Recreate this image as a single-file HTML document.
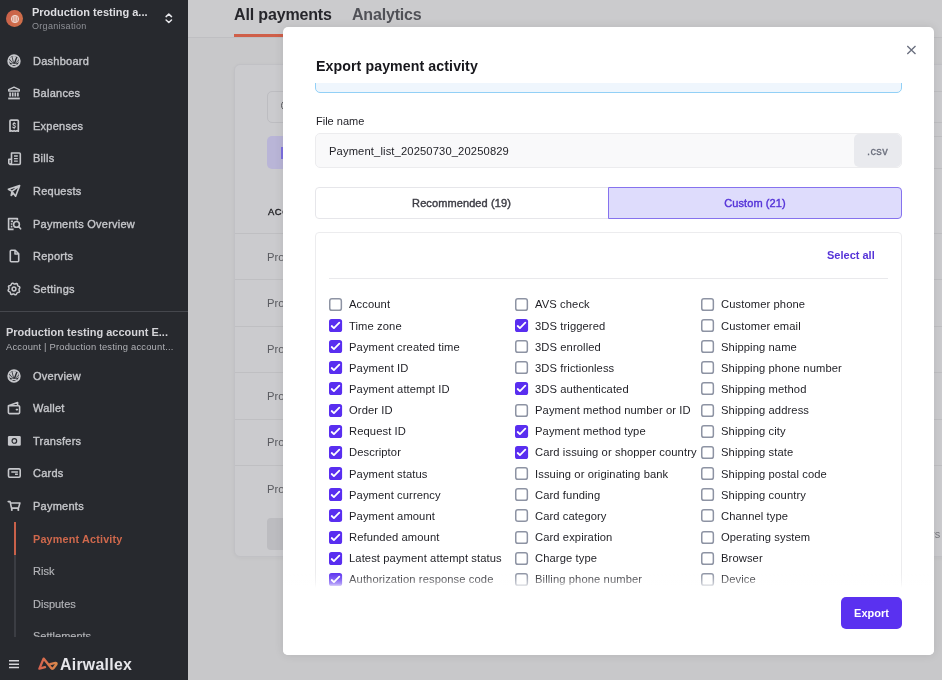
<!DOCTYPE html>
<html lang="en">
<head>
<meta charset="utf-8">
<title>Export payment activity</title>
<style>
*{box-sizing:border-box;margin:0;padding:0}
html,body{width:942px;height:680px;overflow:hidden}
body{font-family:"Liberation Sans",sans-serif;background:#c8c8ca;position:relative;color:#1c1c20}
.abs{position:absolute}
.t{position:absolute;white-space:nowrap;line-height:1;will-change:transform}
#side{position:absolute;left:0;top:0;width:188px;height:680px;background:#27292e;overflow:hidden}
#side .it{font-size:11px;color:#c6c7cb;letter-spacing:.25px;-webkit-text-stroke:.35px #c6c7cb}
#side .sub{color:#b4b5b9;letter-spacing:0;-webkit-text-stroke:.15px #b4b5b9}
#side svg.ic{position:absolute;overflow:visible;left:7px;width:14px;height:14px;fill:none;stroke:#c6c7cb;stroke-width:1.6;stroke-linejoin:round;stroke-linecap:round}
#hdr{position:absolute;left:188px;top:0;width:754px;height:38px;background:#cbcbcd;border-bottom:1px solid #bfbfc2}
#card{position:absolute;left:234px;top:64px;width:720px;height:493px;background:#cbcbce;border:1px solid #c1c1c5;border-radius:6px;box-shadow:0 1px 4px rgba(0,0,0,.04)}
.row{position:absolute;left:235px;width:720px;height:1px;background:#bfbfc2}
#modal{position:absolute;left:283px;top:27px;width:651px;height:628px;background:#fff;border-radius:5px;box-shadow:0 0 10px rgba(0,0,0,.1);overflow:hidden}
.cb{position:absolute;width:13px;height:13px;border:1.5px solid #8c91a1;border-radius:3px;background:#fff}
.cb.on{border:none;background:#592ef0}
.cb.on svg{position:absolute;left:0;top:0;width:13px;height:13px}
.lb{font-size:11.2px;color:#1e1e24;letter-spacing:.1px}
</style>
</head>
<body>
<div id="hdr"></div><div class="t" style="left:234.0px;top:7.1px;font-size:16px;font-weight:bold;color:#26262b;letter-spacing:-.15px">All payments</div><div class="t" style="left:352.4px;top:7.1px;font-size:16px;font-weight:bold;color:#505157;letter-spacing:-.18px">Analytics</div><div class="abs" style="left:234px;top:34px;width:98px;height:3px;background:#cf5f49"></div><div id="card"></div><div class="abs" style="left:267px;top:91px;width:300px;height:32px;border:1px solid #bdbdc1;border-radius:5px;background:#cbcbce"></div><div class="abs" style="left:281px;top:100px;width:11px;height:11px;border:1.6px solid #5a5b60;border-radius:50%"></div><div class="abs" style="left:267px;top:136px;width:60px;height:33px;border-radius:5px;background:#b9b5d7"></div><div class="t" style="left:267.6px;top:206.7px;font-size:9.4px;color:#222226;letter-spacing:.6px;-webkit-text-stroke:.35px #222226">ACCOUNT</div><div class="abs" style="left:281px;top:147px;width:3px;height:12px;background:#7d6fe0"></div><div class="abs" style="left:279px;top:529px;width:2px;height:10px;background:#85868c"></div><div class="row" style="top:233px"></div><div class="row" style="top:279px"></div><div class="row" style="top:326px"></div><div class="row" style="top:372px"></div><div class="row" style="top:419px"></div><div class="row" style="top:465px"></div><div class="t" style="left:267.4px;top:252.1px;font-size:11.2px;color:#5a5b60">Production</div><div class="t" style="left:267.4px;top:298.1px;font-size:11.2px;color:#5a5b60">Production</div><div class="t" style="left:267.4px;top:344.1px;font-size:11.2px;color:#5a5b60">Production</div><div class="t" style="left:267.4px;top:391.1px;font-size:11.2px;color:#5a5b60">Production</div><div class="t" style="left:267.4px;top:437.1px;font-size:11.2px;color:#5a5b60">Production</div><div class="t" style="left:267.4px;top:484.1px;font-size:11.2px;color:#5a5b60">Production</div><div class="abs" style="left:267px;top:518px;width:60px;height:32px;border-radius:4px;background:#bcbcc0"></div><div class="abs" style="left:934px;top:91px;width:8px;height:1px;background:#bfbfc2"></div><div class="abs" style="left:934px;top:122px;width:8px;height:1px;background:#bfbfc2"></div><div class="abs" style="left:934px;top:136px;width:8px;height:1px;background:#bfbfc2"></div><div class="abs" style="left:934px;top:168px;width:8px;height:1px;background:#bfbfc2"></div><div class="t" style="right:1.5px;top:529px;font-size:11px;color:#77787d">filters</div>
<div id="side"><div class="abs" style="left:6px;top:10px;width:17px;height:17px;border-radius:50%;background:linear-gradient(120deg,#c95e4a,#d0724a)"></div><svg class="abs" style="left:9.5px;top:13.5px;width:10px;height:10px" viewBox="0 0 10 10" fill="none" stroke="#f0d8d0" stroke-width="1"><circle cx="5" cy="5" r="3.7"/><path d="M1.3 5 H8.7 M5 1.3 V8.7 M2.1 3 H7.9 M2.1 7 H7.9 M3.4 1.8 V8.2 M6.6 1.8 V8.2" stroke-width=".8"/></svg><div class="t" style="left:32.4px;top:6.8px;font-size:11px;font-weight:bold;color:#dedee2">Production testing a...</div><div class="t" style="left:32.4px;top:21.6px;font-size:9px;color:#8f9197;letter-spacing:.3px">Organisation</div><svg class="abs" style="left:164px;top:12px;width:10px;height:13px" viewBox="0 0 10 13" fill="none" stroke="#e8e8ec" stroke-width="1.5" stroke-linecap="round" stroke-linejoin="round"><path d="M2.1 4.6 L4.8 2.1 L7.5 4.6 M2.1 8 L4.8 10.5 L7.5 8"/></svg><svg class="ic" style="top:53.8px" viewBox="0 0 14 14"><circle cx="7" cy="7" r="5.8" stroke-width="1.8"/><path d="M7 10.6 L2.3 8.3 A4.9 4.9 0 1 1 11.7 8.3 Z" fill="#c6c7cb" stroke="none"/><path d="M7 10.6 L2.6 5.4 M7 10.6 L5 2.6 M7 10.6 L11.6 6.2" stroke="#27292e" stroke-width=".8"/><path d="M7.2 10 L9.7 3.6" stroke="#27292e" stroke-width="1.4"/><path d="M4.2 11.3 Q7 9.6 9.8 11.3" stroke-width="1.3"/></svg><div class="t it" style="left:32.9px;top:55.7px;font-size:11px;">Dashboard</div><svg class="ic" style="top:86.4px" viewBox="0 0 14 14"><path d="M1.7 5 V3.6 L7 1.2 L12.3 3.6 V5 Z" stroke-width="1.4"/><path d="M3.1 6.6 V10.4 M5.7 6.6 V10.4 M8.3 6.6 V10.4 M10.9 6.6 V10.4" stroke-linecap="butt" stroke-width="1.7"/><path d="M1.2 12.5 H12.8" stroke-width="1.8" stroke-linecap="butt"/></svg><div class="t it" style="left:32.9px;top:88.3px;font-size:11px;">Balances</div><svg class="ic" style="top:118.9px" viewBox="0 0 14 14"><path d="M3 2.1 a1 1 0 0 1 1 -1 H10.3 a1 1 0 0 1 1 1 V12.2 L9.9 11.7 L8.5 12.2 L7.15 11.7 L5.8 12.2 L4.4 11.7 L3 12.2 Z" stroke-width="1.7"/><path d="M8.4 4.9 C7.8 4 5.9 4.2 6 5.4 C6.1 6.6 8.4 6.2 8.4 7.6 C8.4 8.8 6.4 8.9 5.8 8.1 M7.15 3.3 V4.2 M7.15 8.7 V9.6" stroke-width="1.1"/></svg><div class="t it" style="left:32.9px;top:120.8px;font-size:11px;">Expenses</div><svg class="ic" style="top:151.5px" viewBox="0 0 14 14"><path d="M4.5 1 H12.3 a1 1 0 0 1 1 1 V11.3 a1.2 1.2 0 0 1 -1.2 1.2 H3 M4.5 1 V11 a1.4 1.4 0 0 1 -2.7 0.2 V7.3 H4.3" stroke-width="1.6"/><path d="M7 4 H10.8 M7 6.6 H10.8 M7 9.2 H10.8" stroke-width="1.3" stroke-linecap="butt"/></svg><div class="t it" style="left:32.9px;top:153.4px;font-size:11px;">Bills</div><svg class="ic" style="top:184.1px" viewBox="0 0 14 14"><path d="M12.6 1.6 L1.4 5.2 L5 7.4 L12.6 1.6 L8.6 12.2 L5 7.4 M5 7.4 L4.2 11.4 L6.6 9.4"/></svg><div class="t it" style="left:32.9px;top:186.0px;font-size:11px;">Requests</div><svg class="ic" style="top:216.6px" viewBox="0 0 14 14"><path d="M10.4 3.4 V1.6 H1.6 V12.4 H6.6 M3.8 4.4 H6 M3.8 7 H5.4 M3.8 9.6 H5.4" stroke-linecap="butt"/><circle cx="9.5" cy="7.4" r="2.9"/><path d="M11.6 9.6 L13.6 11.8"/></svg><div class="t it" style="left:32.9px;top:218.5px;font-size:11px;">Payments Overview</div><svg class="ic" style="top:249.2px" viewBox="0 0 14 14"><path d="M3.3 2.2 a1 1 0 0 1 1 -1 H8.2 L11.7 4.8 V11.8 a1 1 0 0 1 -1 1 H4.3 a1 1 0 0 1 -1 -1 Z M8 1.6 V5 H11.5"/></svg><div class="t it" style="left:32.9px;top:251.1px;font-size:11px;">Reports</div><svg class="ic" style="top:281.8px" viewBox="0 0 14 14"><path d="M12.54 9.30 L11.99 10.33 L10.61 10.61 L9.83 11.24 L9.30 12.54 L8.17 12.88 L7.00 12.10 L6.01 12.00 L4.70 12.54 L3.67 11.99 L3.39 10.61 L2.76 9.83 L1.46 9.30 L1.12 8.17 L1.90 7.00 L2.00 6.01 L1.46 4.70 L2.01 3.67 L3.39 3.39 L4.17 2.76 L4.70 1.46 L5.83 1.12 L7.00 1.90 L7.99 2.00 L9.30 1.46 L10.33 2.01 L10.61 3.39 L11.24 4.17 L12.54 4.70 L12.88 5.83 L12.10 7.00 L12.00 7.99 Z" stroke-width="1.5"/><circle cx="7" cy="7" r="1.9" stroke-width="1.5"/></svg><div class="t it" style="left:32.9px;top:283.7px;font-size:11px;">Settings</div><div class="abs" style="left:0;top:311px;width:188px;height:1px;background:#45474d"></div><div class="t" style="left:6.0px;top:326.9px;font-size:11px;font-weight:bold;color:#d4d4d8">Production testing account E...</div><div class="t" style="left:6.0px;top:341.8px;font-size:9.4px;color:#b0b1b6;letter-spacing:.2px">Account | Production testing account...</div><svg class="ic" style="top:368.6px" viewBox="0 0 14 14"><circle cx="7" cy="7" r="5.8" stroke-width="1.8"/><path d="M7 10.6 L2.3 8.3 A4.9 4.9 0 1 1 11.7 8.3 Z" fill="#c6c7cb" stroke="none"/><path d="M7 10.6 L2.6 5.4 M7 10.6 L5 2.6 M7 10.6 L11.6 6.2" stroke="#27292e" stroke-width=".8"/><path d="M7.2 10 L9.7 3.6" stroke="#27292e" stroke-width="1.4"/><path d="M4.2 11.3 Q7 9.6 9.8 11.3" stroke-width="1.3"/></svg><div class="t it" style="left:32.9px;top:370.5px;font-size:11px;">Overview</div><svg class="ic" style="top:401.2px" viewBox="0 0 14 14"><path d="M1.4 4.8 H11.6 a1 1 0 0 1 1 1 V11.6 a1 1 0 0 1 -1 1 H2.4 a1 1 0 0 1 -1 -1 Z M1.4 4.8 L10.6 1.6 V4.6 M9.4 8.6 H10.4"/></svg><div class="t it" style="left:32.9px;top:403.1px;font-size:11px;">Wallet</div><svg class="ic" style="top:433.7px" viewBox="0 0 14 14"><rect x="0.9" y="2.1" width="12.9" height="9.7" rx="1.3" fill="#c6c7cb" stroke="none"/><circle cx="7.35" cy="6.95" r="2.3" fill="none" stroke="#27292e" stroke-width="1.2"/></svg><div class="t it" style="left:32.9px;top:435.6px;font-size:11px;">Transfers</div><svg class="ic" style="top:466.3px" viewBox="0 0 14 14"><rect x="1.5" y="2.9" width="11.7" height="8.3" rx="1.2"/><path d="M4.3 6 H10.9 M8 8.3 H10.9" stroke-linecap="butt" stroke-width="1.4"/></svg><div class="t it" style="left:32.9px;top:468.2px;font-size:11px;">Cards</div><svg class="ic" style="top:498.9px" viewBox="0 0 14 14"><path d="M1.2 2.6 H3.1 L4.5 9.1 H11.5 L12.9 4 H3.5" stroke-width="1.6"/><path d="M4.9 9.1 L4.6 10.4 M11.2 9.1 L11.4 10.4" stroke-width="1.4"/><circle cx="4.8" cy="11.1" r="1" fill="#c6c7cb" stroke="none"/><circle cx="11.3" cy="11.1" r="1" fill="#c6c7cb" stroke="none"/></svg><div class="t it" style="left:32.9px;top:500.8px;font-size:11px;">Payments</div><div class="abs" style="left:14px;top:522px;width:2px;height:115px;background:#3b3d43"></div><div class="abs" style="left:14px;top:522px;width:2px;height:33px;background:#c9614a"></div><div class="t" style="left:32.9px;top:533.7px;font-size:10.8px;font-weight:bold;color:#cf684c;letter-spacing:.18px">Payment Activity</div><div class="t it sub" style="left:32.9px;top:566.0px;font-size:11px;">Risk</div><div class="t it sub" style="left:32.9px;top:598.5px;font-size:11px;">Disputes</div><div class="t it sub" style="left:32.9px;top:631.1px;font-size:11px;">Settlements</div><div class="abs" style="left:0;top:637px;width:188px;height:43px;background:#27292e"></div><svg class="abs" style="left:9px;top:659px;width:10px;height:10px" viewBox="0 0 10 10" stroke="#d6d6da" stroke-width="1.5"><path d="M0 1.8 H10 M0 5.2 H10 M0 8.6 H10"/></svg><svg class="abs" style="left:36px;top:655px;width:24px;height:18px" viewBox="36 655 24 18" fill="none" stroke="url(#lg)" stroke-width="2.35" stroke-linejoin="round" stroke-linecap="round"><defs><linearGradient id="lg" x1="38" y1="0" x2="58" y2="0" gradientUnits="userSpaceOnUse"><stop offset="0" stop-color="#d7604f"/><stop offset="1" stop-color="#da8b4b"/></linearGradient></defs><path d="M45 667.2 L39.4 668.6 L43.6 658.6 L51.4 668.2 Q52.6 669.4 53.8 667.8 L56.4 664.2 Q57 662.8 55.4 662.9 L50.2 664.2"/></svg><div class="t" style="left:60.4px;top:656.8px;font-size:15.8px;font-weight:bold;color:#e6e6ea;letter-spacing:.3px">Airwallex</div></div>
<div id="modal"><div class="t" style="left:33.3px;top:31.6px;font-size:14.2px;font-weight:bold;color:#17171c;letter-spacing:.08px">Export payment activity</div><svg class="abs" style="left:623px;top:17px;width:12px;height:12px" viewBox="0 0 12 12" stroke="#6a6f7f" stroke-width="1.35" fill="none"><path d="M1.3 1.9 L9.5 9.9 M9.5 1.9 L1.3 9.9"/></svg><div class="abs" style="left:32px;top:26px;width:587px;height:40px;border:1px solid #92d0f6;border-radius:5px;background:#eff6fd;clip-path:inset(30px 0 0 0)"></div><div class="t" style="left:32.8px;top:88.6px;font-size:11px;color:#1e1e24">File name</div><div class="abs" style="left:32px;top:106px;width:587px;height:35px;border:1px solid #ececee;border-radius:5px;background:#f9f9fa"></div><div class="abs" style="left:571px;top:107px;width:47px;height:33px;background:#e9eaee;border-radius:5px"></div><div class="t" style="left:46.4px;top:118.8px;font-size:11.2px;color:#1e1e24;letter-spacing:.13px">Payment_list_20250730_20250829</div><div class="t" style="left:584.2px;top:119.0px;font-size:11px;color:#6b6f7d;letter-spacing:.4px;-webkit-text-stroke:.3px #6b6f7d">.csv</div><div class="abs" style="left:32px;top:160px;width:294px;height:32px;border:1px solid #e6e6ea;border-radius:4px 0 0 4px;background:#fff"></div><div class="abs" style="left:325px;top:160px;width:294px;height:32px;border:1px solid #8672ee;border-radius:0 4px 4px 0;background:#dedcfc"></div><div class="t" style="left:32px;top:170.5px;width:293px;text-align:center;font-size:11px;letter-spacing:.1px;color:#3c3c44;-webkit-text-stroke:.4px #3c3c44">Recommended (19)</div><div class="t" style="left:325px;top:170.5px;width:294px;text-align:center;font-size:11px;letter-spacing:.08px;color:#5533d8;-webkit-text-stroke:.4px #5533d8">Custom (21)</div><div class="abs" style="left:32px;top:205px;width:587px;height:380px;border:1px solid #ececee;border-radius:4px;background:#fff"></div><div class="t" style="left:544.3px;top:223.1px;font-size:11px;font-weight:bold;color:#5533d8">Select all</div><div class="abs" style="left:46px;top:251px;width:559px;height:1px;background:#e9e9ec"></div><svg class="abs" style="left:46.2px;top:270.8px;width:14px;height:14px" viewBox="0 0 14 14"><rect x="0.75" y="0.75" width="11.6" height="11.6" rx="2.2" fill="#fff" stroke="#8d93a3" stroke-width="1.5"/></svg><div class="t lb" style="left:65.8px;top:272.3px;font-size:11.2px;">Account</div><svg class="abs" style="left:46.2px;top:292.0px;width:14px;height:14px" viewBox="0 0 14 14"><rect x="0" y="0" width="13.1" height="13.1" rx="2.6" fill="#592ef0"/><path d="M2.7 7 L4.9 9.1 L10.3 3.6" fill="none" stroke="#fff" stroke-width="1.8" stroke-linecap="round" stroke-linejoin="round"/></svg><div class="t lb" style="left:65.8px;top:293.5px;font-size:11.2px;">Time zone</div><svg class="abs" style="left:46.2px;top:313.1px;width:14px;height:14px" viewBox="0 0 14 14"><rect x="0" y="0" width="13.1" height="13.1" rx="2.6" fill="#592ef0"/><path d="M2.7 7 L4.9 9.1 L10.3 3.6" fill="none" stroke="#fff" stroke-width="1.8" stroke-linecap="round" stroke-linejoin="round"/></svg><div class="t lb" style="left:65.8px;top:314.6px;font-size:11.2px;">Payment created time</div><svg class="abs" style="left:46.2px;top:334.3px;width:14px;height:14px" viewBox="0 0 14 14"><rect x="0" y="0" width="13.1" height="13.1" rx="2.6" fill="#592ef0"/><path d="M2.7 7 L4.9 9.1 L10.3 3.6" fill="none" stroke="#fff" stroke-width="1.8" stroke-linecap="round" stroke-linejoin="round"/></svg><div class="t lb" style="left:65.8px;top:335.8px;font-size:11.2px;">Payment ID</div><svg class="abs" style="left:46.2px;top:355.4px;width:14px;height:14px" viewBox="0 0 14 14"><rect x="0" y="0" width="13.1" height="13.1" rx="2.6" fill="#592ef0"/><path d="M2.7 7 L4.9 9.1 L10.3 3.6" fill="none" stroke="#fff" stroke-width="1.8" stroke-linecap="round" stroke-linejoin="round"/></svg><div class="t lb" style="left:65.8px;top:356.9px;font-size:11.2px;">Payment attempt ID</div><svg class="abs" style="left:46.2px;top:376.6px;width:14px;height:14px" viewBox="0 0 14 14"><rect x="0" y="0" width="13.1" height="13.1" rx="2.6" fill="#592ef0"/><path d="M2.7 7 L4.9 9.1 L10.3 3.6" fill="none" stroke="#fff" stroke-width="1.8" stroke-linecap="round" stroke-linejoin="round"/></svg><div class="t lb" style="left:65.8px;top:378.1px;font-size:11.2px;">Order ID</div><svg class="abs" style="left:46.2px;top:397.7px;width:14px;height:14px" viewBox="0 0 14 14"><rect x="0" y="0" width="13.1" height="13.1" rx="2.6" fill="#592ef0"/><path d="M2.7 7 L4.9 9.1 L10.3 3.6" fill="none" stroke="#fff" stroke-width="1.8" stroke-linecap="round" stroke-linejoin="round"/></svg><div class="t lb" style="left:65.8px;top:399.2px;font-size:11.2px;">Request ID</div><svg class="abs" style="left:46.2px;top:418.9px;width:14px;height:14px" viewBox="0 0 14 14"><rect x="0" y="0" width="13.1" height="13.1" rx="2.6" fill="#592ef0"/><path d="M2.7 7 L4.9 9.1 L10.3 3.6" fill="none" stroke="#fff" stroke-width="1.8" stroke-linecap="round" stroke-linejoin="round"/></svg><div class="t lb" style="left:65.8px;top:420.4px;font-size:11.2px;">Descriptor</div><svg class="abs" style="left:46.2px;top:440.0px;width:14px;height:14px" viewBox="0 0 14 14"><rect x="0" y="0" width="13.1" height="13.1" rx="2.6" fill="#592ef0"/><path d="M2.7 7 L4.9 9.1 L10.3 3.6" fill="none" stroke="#fff" stroke-width="1.8" stroke-linecap="round" stroke-linejoin="round"/></svg><div class="t lb" style="left:65.8px;top:441.5px;font-size:11.2px;">Payment status</div><svg class="abs" style="left:46.2px;top:461.2px;width:14px;height:14px" viewBox="0 0 14 14"><rect x="0" y="0" width="13.1" height="13.1" rx="2.6" fill="#592ef0"/><path d="M2.7 7 L4.9 9.1 L10.3 3.6" fill="none" stroke="#fff" stroke-width="1.8" stroke-linecap="round" stroke-linejoin="round"/></svg><div class="t lb" style="left:65.8px;top:462.7px;font-size:11.2px;">Payment currency</div><svg class="abs" style="left:46.2px;top:482.3px;width:14px;height:14px" viewBox="0 0 14 14"><rect x="0" y="0" width="13.1" height="13.1" rx="2.6" fill="#592ef0"/><path d="M2.7 7 L4.9 9.1 L10.3 3.6" fill="none" stroke="#fff" stroke-width="1.8" stroke-linecap="round" stroke-linejoin="round"/></svg><div class="t lb" style="left:65.8px;top:483.8px;font-size:11.2px;">Payment amount</div><svg class="abs" style="left:46.2px;top:503.5px;width:14px;height:14px" viewBox="0 0 14 14"><rect x="0" y="0" width="13.1" height="13.1" rx="2.6" fill="#592ef0"/><path d="M2.7 7 L4.9 9.1 L10.3 3.6" fill="none" stroke="#fff" stroke-width="1.8" stroke-linecap="round" stroke-linejoin="round"/></svg><div class="t lb" style="left:65.8px;top:505.0px;font-size:11.2px;">Refunded amount</div><svg class="abs" style="left:46.2px;top:524.6px;width:14px;height:14px" viewBox="0 0 14 14"><rect x="0" y="0" width="13.1" height="13.1" rx="2.6" fill="#592ef0"/><path d="M2.7 7 L4.9 9.1 L10.3 3.6" fill="none" stroke="#fff" stroke-width="1.8" stroke-linecap="round" stroke-linejoin="round"/></svg><div class="t lb" style="left:65.8px;top:526.1px;font-size:11.2px;">Latest payment attempt status</div><svg class="abs" style="left:46.2px;top:545.8px;width:14px;height:14px" viewBox="0 0 14 14"><rect x="0" y="0" width="13.1" height="13.1" rx="2.6" fill="#592ef0"/><path d="M2.7 7 L4.9 9.1 L10.3 3.6" fill="none" stroke="#fff" stroke-width="1.8" stroke-linecap="round" stroke-linejoin="round"/></svg><div class="t lb" style="left:65.8px;top:547.3px;font-size:11.2px;">Authorization response code</div><svg class="abs" style="left:232.2px;top:270.8px;width:14px;height:14px" viewBox="0 0 14 14"><rect x="0.75" y="0.75" width="11.6" height="11.6" rx="2.2" fill="#fff" stroke="#8d93a3" stroke-width="1.5"/></svg><div class="t lb" style="left:251.8px;top:272.3px;font-size:11.2px;">AVS check</div><svg class="abs" style="left:232.2px;top:292.0px;width:14px;height:14px" viewBox="0 0 14 14"><rect x="0" y="0" width="13.1" height="13.1" rx="2.6" fill="#592ef0"/><path d="M2.7 7 L4.9 9.1 L10.3 3.6" fill="none" stroke="#fff" stroke-width="1.8" stroke-linecap="round" stroke-linejoin="round"/></svg><div class="t lb" style="left:251.8px;top:293.5px;font-size:11.2px;">3DS triggered</div><svg class="abs" style="left:232.2px;top:313.1px;width:14px;height:14px" viewBox="0 0 14 14"><rect x="0.75" y="0.75" width="11.6" height="11.6" rx="2.2" fill="#fff" stroke="#8d93a3" stroke-width="1.5"/></svg><div class="t lb" style="left:251.8px;top:314.6px;font-size:11.2px;">3DS enrolled</div><svg class="abs" style="left:232.2px;top:334.3px;width:14px;height:14px" viewBox="0 0 14 14"><rect x="0.75" y="0.75" width="11.6" height="11.6" rx="2.2" fill="#fff" stroke="#8d93a3" stroke-width="1.5"/></svg><div class="t lb" style="left:251.8px;top:335.8px;font-size:11.2px;">3DS frictionless</div><svg class="abs" style="left:232.2px;top:355.4px;width:14px;height:14px" viewBox="0 0 14 14"><rect x="0" y="0" width="13.1" height="13.1" rx="2.6" fill="#592ef0"/><path d="M2.7 7 L4.9 9.1 L10.3 3.6" fill="none" stroke="#fff" stroke-width="1.8" stroke-linecap="round" stroke-linejoin="round"/></svg><div class="t lb" style="left:251.8px;top:356.9px;font-size:11.2px;">3DS authenticated</div><svg class="abs" style="left:232.2px;top:376.6px;width:14px;height:14px" viewBox="0 0 14 14"><rect x="0.75" y="0.75" width="11.6" height="11.6" rx="2.2" fill="#fff" stroke="#8d93a3" stroke-width="1.5"/></svg><div class="t lb" style="left:251.8px;top:378.1px;font-size:11.2px;">Payment method number or ID</div><svg class="abs" style="left:232.2px;top:397.7px;width:14px;height:14px" viewBox="0 0 14 14"><rect x="0" y="0" width="13.1" height="13.1" rx="2.6" fill="#592ef0"/><path d="M2.7 7 L4.9 9.1 L10.3 3.6" fill="none" stroke="#fff" stroke-width="1.8" stroke-linecap="round" stroke-linejoin="round"/></svg><div class="t lb" style="left:251.8px;top:399.2px;font-size:11.2px;">Payment method type</div><svg class="abs" style="left:232.2px;top:418.9px;width:14px;height:14px" viewBox="0 0 14 14"><rect x="0" y="0" width="13.1" height="13.1" rx="2.6" fill="#592ef0"/><path d="M2.7 7 L4.9 9.1 L10.3 3.6" fill="none" stroke="#fff" stroke-width="1.8" stroke-linecap="round" stroke-linejoin="round"/></svg><div class="t lb" style="left:251.8px;top:420.4px;font-size:11.2px;">Card issuing or shopper country</div><svg class="abs" style="left:232.2px;top:440.0px;width:14px;height:14px" viewBox="0 0 14 14"><rect x="0.75" y="0.75" width="11.6" height="11.6" rx="2.2" fill="#fff" stroke="#8d93a3" stroke-width="1.5"/></svg><div class="t lb" style="left:251.8px;top:441.5px;font-size:11.2px;">Issuing or originating bank</div><svg class="abs" style="left:232.2px;top:461.2px;width:14px;height:14px" viewBox="0 0 14 14"><rect x="0.75" y="0.75" width="11.6" height="11.6" rx="2.2" fill="#fff" stroke="#8d93a3" stroke-width="1.5"/></svg><div class="t lb" style="left:251.8px;top:462.7px;font-size:11.2px;">Card funding</div><svg class="abs" style="left:232.2px;top:482.3px;width:14px;height:14px" viewBox="0 0 14 14"><rect x="0.75" y="0.75" width="11.6" height="11.6" rx="2.2" fill="#fff" stroke="#8d93a3" stroke-width="1.5"/></svg><div class="t lb" style="left:251.8px;top:483.8px;font-size:11.2px;">Card category</div><svg class="abs" style="left:232.2px;top:503.5px;width:14px;height:14px" viewBox="0 0 14 14"><rect x="0.75" y="0.75" width="11.6" height="11.6" rx="2.2" fill="#fff" stroke="#8d93a3" stroke-width="1.5"/></svg><div class="t lb" style="left:251.8px;top:505.0px;font-size:11.2px;">Card expiration</div><svg class="abs" style="left:232.2px;top:524.6px;width:14px;height:14px" viewBox="0 0 14 14"><rect x="0.75" y="0.75" width="11.6" height="11.6" rx="2.2" fill="#fff" stroke="#8d93a3" stroke-width="1.5"/></svg><div class="t lb" style="left:251.8px;top:526.1px;font-size:11.2px;">Charge type</div><svg class="abs" style="left:232.2px;top:545.8px;width:14px;height:14px" viewBox="0 0 14 14"><rect x="0.75" y="0.75" width="11.6" height="11.6" rx="2.2" fill="#fff" stroke="#8d93a3" stroke-width="1.5"/></svg><div class="t lb" style="left:251.8px;top:547.3px;font-size:11.2px;">Billing phone number</div><svg class="abs" style="left:418.2px;top:270.8px;width:14px;height:14px" viewBox="0 0 14 14"><rect x="0.75" y="0.75" width="11.6" height="11.6" rx="2.2" fill="#fff" stroke="#8d93a3" stroke-width="1.5"/></svg><div class="t lb" style="left:437.8px;top:272.3px;font-size:11.2px;">Customer phone</div><svg class="abs" style="left:418.2px;top:292.0px;width:14px;height:14px" viewBox="0 0 14 14"><rect x="0.75" y="0.75" width="11.6" height="11.6" rx="2.2" fill="#fff" stroke="#8d93a3" stroke-width="1.5"/></svg><div class="t lb" style="left:437.8px;top:293.5px;font-size:11.2px;">Customer email</div><svg class="abs" style="left:418.2px;top:313.1px;width:14px;height:14px" viewBox="0 0 14 14"><rect x="0.75" y="0.75" width="11.6" height="11.6" rx="2.2" fill="#fff" stroke="#8d93a3" stroke-width="1.5"/></svg><div class="t lb" style="left:437.8px;top:314.6px;font-size:11.2px;">Shipping name</div><svg class="abs" style="left:418.2px;top:334.3px;width:14px;height:14px" viewBox="0 0 14 14"><rect x="0.75" y="0.75" width="11.6" height="11.6" rx="2.2" fill="#fff" stroke="#8d93a3" stroke-width="1.5"/></svg><div class="t lb" style="left:437.8px;top:335.8px;font-size:11.2px;">Shipping phone number</div><svg class="abs" style="left:418.2px;top:355.4px;width:14px;height:14px" viewBox="0 0 14 14"><rect x="0.75" y="0.75" width="11.6" height="11.6" rx="2.2" fill="#fff" stroke="#8d93a3" stroke-width="1.5"/></svg><div class="t lb" style="left:437.8px;top:356.9px;font-size:11.2px;">Shipping method</div><svg class="abs" style="left:418.2px;top:376.6px;width:14px;height:14px" viewBox="0 0 14 14"><rect x="0.75" y="0.75" width="11.6" height="11.6" rx="2.2" fill="#fff" stroke="#8d93a3" stroke-width="1.5"/></svg><div class="t lb" style="left:437.8px;top:378.1px;font-size:11.2px;">Shipping address</div><svg class="abs" style="left:418.2px;top:397.7px;width:14px;height:14px" viewBox="0 0 14 14"><rect x="0.75" y="0.75" width="11.6" height="11.6" rx="2.2" fill="#fff" stroke="#8d93a3" stroke-width="1.5"/></svg><div class="t lb" style="left:437.8px;top:399.2px;font-size:11.2px;">Shipping city</div><svg class="abs" style="left:418.2px;top:418.9px;width:14px;height:14px" viewBox="0 0 14 14"><rect x="0.75" y="0.75" width="11.6" height="11.6" rx="2.2" fill="#fff" stroke="#8d93a3" stroke-width="1.5"/></svg><div class="t lb" style="left:437.8px;top:420.4px;font-size:11.2px;">Shipping state</div><svg class="abs" style="left:418.2px;top:440.0px;width:14px;height:14px" viewBox="0 0 14 14"><rect x="0.75" y="0.75" width="11.6" height="11.6" rx="2.2" fill="#fff" stroke="#8d93a3" stroke-width="1.5"/></svg><div class="t lb" style="left:437.8px;top:441.5px;font-size:11.2px;">Shipping postal code</div><svg class="abs" style="left:418.2px;top:461.2px;width:14px;height:14px" viewBox="0 0 14 14"><rect x="0.75" y="0.75" width="11.6" height="11.6" rx="2.2" fill="#fff" stroke="#8d93a3" stroke-width="1.5"/></svg><div class="t lb" style="left:437.8px;top:462.7px;font-size:11.2px;">Shipping country</div><svg class="abs" style="left:418.2px;top:482.3px;width:14px;height:14px" viewBox="0 0 14 14"><rect x="0.75" y="0.75" width="11.6" height="11.6" rx="2.2" fill="#fff" stroke="#8d93a3" stroke-width="1.5"/></svg><div class="t lb" style="left:437.8px;top:483.8px;font-size:11.2px;">Channel type</div><svg class="abs" style="left:418.2px;top:503.5px;width:14px;height:14px" viewBox="0 0 14 14"><rect x="0.75" y="0.75" width="11.6" height="11.6" rx="2.2" fill="#fff" stroke="#8d93a3" stroke-width="1.5"/></svg><div class="t lb" style="left:437.8px;top:505.0px;font-size:11.2px;">Operating system</div><svg class="abs" style="left:418.2px;top:524.6px;width:14px;height:14px" viewBox="0 0 14 14"><rect x="0.75" y="0.75" width="11.6" height="11.6" rx="2.2" fill="#fff" stroke="#8d93a3" stroke-width="1.5"/></svg><div class="t lb" style="left:437.8px;top:526.1px;font-size:11.2px;">Browser</div><svg class="abs" style="left:418.2px;top:545.8px;width:14px;height:14px" viewBox="0 0 14 14"><rect x="0.75" y="0.75" width="11.6" height="11.6" rx="2.2" fill="#fff" stroke="#8d93a3" stroke-width="1.5"/></svg><div class="t lb" style="left:437.8px;top:547.3px;font-size:11.2px;">Device</div><div class="abs" style="left:0;top:545px;width:651px;height:16px;background:linear-gradient(rgba(255,255,255,0),rgba(255,255,255,.22) 40%,rgba(255,255,255,.5) 72%,rgba(255,255,255,1))"></div><div class="abs" style="left:0;top:561px;width:651px;height:80px;background:#fff"></div><div class="abs" style="left:558px;top:570px;width:61px;height:32px;border-radius:5px;background:#5a31f0"></div><div class="t" style="left:558px;top:580.9px;width:61px;text-align:center;font-size:11px;font-weight:bold;color:#fff">Export</div></div>
</body>
</html>
